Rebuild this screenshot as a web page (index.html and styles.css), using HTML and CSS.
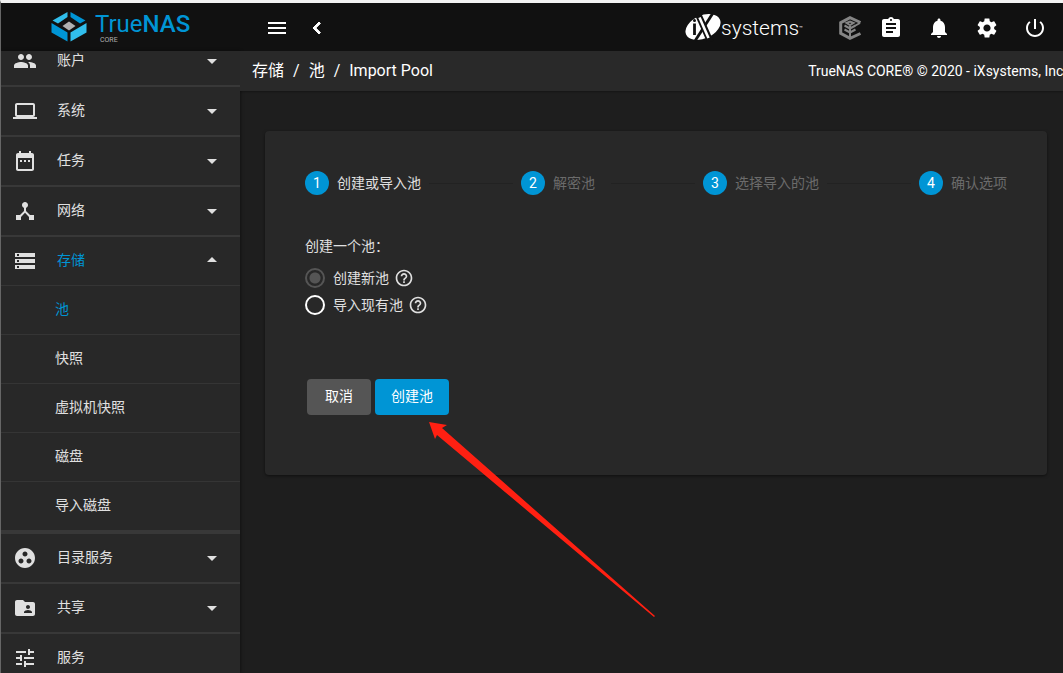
FILE: index.html
```html
<!DOCTYPE html>
<html lang="zh-CN">
<head>
<meta charset="utf-8">
<title>TrueNAS - Import Pool</title>
<link rel="stylesheet" href="styles.css">
</head>
<body>
<div class="app">
  <header class="topbar">
    <a class="brand" href="#" aria-label="TrueNAS CORE">
      <svg class="brand-mark" viewBox="0 0 36 30">
        <path fill="#31beec" d="M16.500 0V5L7 11.500L1.500 8.500ZM35.500 11L19.500 20.500V29.500L35.500 20.500Z"/>
        <path fill="#0095d5" d="M19.500 0L34.500 8.500L29 11.500L19.500 5ZM.5 11L16.500 20.500V29.500L.5 20.500Z"/>
        <path fill="#b0b0b0" d="M18 9.500L24.500 14L18 18.500L11.500 14Z"/>
      </svg>
      <span class="brand-text">
        <span class="brand-name">True<b>NAS</b></span>
        <span class="brand-edition">CORE</span>
      </span>
    </a>
    <div class="topbar-left">
      <button class="icon-button" aria-label="Menu"><svg class="icon" viewBox="0 0 24 24"><path d="M3 18h18v-2H3v2zm0-5h18v-2H3v2zm0-7v2h18V6H3z"/></svg></button>
      <button class="icon-button" aria-label="Collapse"><svg class="icon chevron" viewBox="0 0 24 24"><path d="M15.410 7.410L14 6l-6 6 6 6 1.410-1.410L10.830 12z"/></svg></button>
    </div>
    <a class="vendor" href="#" aria-label="iXsystems">
      <svg class="vendor-mark" viewBox="0 0 36 28">
        <ellipse cx="18" cy="13" rx="18.500" ry="11.500" transform="rotate(-24 18 13)" fill="#fff"/>
        <path d="M13 0L25.500 28" stroke="#111" stroke-width="6.500"/>
        <path d="M28 -1L10 27" stroke="#111" stroke-width="2.800"/>
        <path d="M14.500 3.500L23.500 24" stroke="#fff" stroke-width="2.600"/>
        <path d="M9.500 9.500V21" stroke="#111" stroke-width="2.800"/><circle cx="9.500" cy="6.500" r="1.500" fill="#111"/>
      </svg>
      <span class="vendor-name">systems</span><span class="vendor-tm">™</span>
    </a>
    <button class="icon-button command" aria-label="TrueCommand"><svg class="icon" viewBox="0 0 24 24"><g fill="none" stroke="#858585"><path stroke-width="3" d="M22.500 6.500L12 1.700L2.700 6.700V17.300L12 22.300L22.500 17.500"/><path stroke-width="2" d="M12 8V21M6.500 9.500L12 12.500L17.500 9.500M6.500 13.500L12 16.500L17.500 13.500M8.500 7L12 9L15.500 7L12 5.500ZM17.500 9.500L22 7"/></g></svg></button>
    <div class="topbar-right">
      <button class="icon-button" aria-label="Tasks"><svg class="icon" viewBox="0 0 24 24"><path d="M19 3h-4.180C14.400 1.840 13.300 1 12 1c-1.300 0-2.400.84-2.820 2H5c-1.100 0-2 .9-2 2v14c0 1.100.9 2 2 2h14c1.100 0 2-.9 2-2V5c0-1.100-.9-2-2-2zm-7 0c.55 0 1 .45 1 1s-.45 1-1 1-1-.45-1-1 .45-1 1-1zm2 14H7v-2h7v2zm3-4H7v-2h10v2zm0-4H7V7h10v2z"/></svg></button>
      <button class="icon-button" aria-label="Alerts"><svg class="icon" viewBox="0 0 24 24"><path d="M12 22c1.100 0 2-.9 2-2h-4c0 1.100.89 2 2 2zm6-6v-5c0-3.070-1.640-5.640-4.500-6.320V4c0-.83-.67-1.500-1.500-1.500s-1.500.67-1.500 1.500v.68C7.630 5.360 6 7.920 6 11v5l-2 2v1h16v-1l-2-2z"/></svg></button>
      <button class="icon-button" aria-label="Settings"><svg class="icon" viewBox="0 0 24 24"><path d="M19.140 12.940c.04-.3.060-.61.060-.94 0-.32-.02-.64-.07-.94l2.030-1.580c.18-.14.230-.41.120-.61l-1.920-3.320c-.12-.22-.37-.29-.59-.22l-2.390.96c-.5-.38-1.030-.7-1.620-.94L14.400 2.810c-.04-.24-.24-.41-.48-.41h-3.840c-.24 0-.43.17-.47.41L9.250 5.350c-.59.24-1.130.57-1.620.94l-2.390-.96c-.22-.08-.47 0-.59.22L2.740 8.870c-.12.21-.08.47.12.61l2.030 1.580c-.05.3-.09.63-.09.94s.02.64.07.94l-2.030 1.580c-.18.14-.23.41-.12.61l1.920 3.320c.12.220.37.290.59.220l2.390-.96c.5.380 1.030.7 1.620.94l.36 2.540c.05.240.24.410.48.410h3.840c.24 0 .44-.17.470-.41l.36-2.540c.59-.24 1.130-.56 1.620-.94l2.390.96c.22.080.47 0 .59-.22l1.920-3.320c.12-.22.070-.47-.12-.61l-2.010-1.580zM12 15.600c-1.980 0-3.600-1.620-3.600-3.600s1.620-3.600 3.600-3.600 3.600 1.620 3.600 3.600-1.620 3.600-3.600 3.600z"/></svg></button>
      <button class="icon-button" aria-label="Power"><svg class="icon" viewBox="0 0 24 24"><path d="M13 3h-2v10h2V3zm4.830 2.170l-1.420 1.420C17.990 7.860 19 9.810 19 12c0 3.870-3.130 7-7 7s-7-3.130-7-7c0-2.190 1.010-4.140 2.580-5.420L6.170 5.170C4.230 6.820 3 9.260 3 12c0 4.970 4.030 9 9 9s9-4.030 9-9c0-2.740-1.230-5.180-3.170-6.830z"/></svg></button>
    </div>
  </header>

  <div class="body">
    <nav class="sidebar">
      <ul class="menu">
        <li><a class="menu-item" href="#"><svg class="icon" viewBox="0 0 24 24"><path d="M16 11c1.660 0 2.990-1.340 2.990-3S17.660 5 16 5c-1.660 0-3 1.340-3 3s1.340 3 3 3zm-8 0c1.660 0 2.990-1.340 2.990-3S9.660 5 8 5C6.340 5 5 6.340 5 8s1.340 3 3 3zm0 2c-2.330 0-7 1.170-7 3.500V19h14v-2.500c0-2.330-4.670-3.500-7-3.500zm8 0c-.29 0-.62.020-.97.050 1.160.84 1.970 1.970 1.970 3.450V19h6v-2.500c0-2.330-4.670-3.500-7-3.500z"/></svg><span class="menu-label">账户</span><svg class="icon" viewBox="0 0 24 24"><path d="M7 10l5 5 5-5z"/></svg></a></li>
        <li><a class="menu-item" href="#"><svg class="icon" viewBox="0 0 24 24"><path d="M20 18c1.100 0 1.990-.9 1.990-2L22 6c0-1.100-.9-2-2-2H4c-1.100 0-2 .9-2 2v10c0 1.100.9 2 2 2H0v2h24v-2h-4zM4 6h16v10H4V6z"/></svg><span class="menu-label">系统</span><svg class="icon" viewBox="0 0 24 24"><path d="M7 10l5 5 5-5z"/></svg></a></li>
        <li><a class="menu-item" href="#"><svg class="icon" viewBox="0 0 24 24"><path d="M9 11H7v2h2v-2zm4 0h-2v2h2v-2zm4 0h-2v2h2v-2zm2-7h-1V2h-2v2H8V2H6v2H5c-1.110 0-1.990.9-1.990 2L3 20c0 1.100.89 2 2 2h14c1.100 0 2-.9 2-2V6c0-1.100-.9-2-2-2zm0 16H5V9h14v11z"/></svg><span class="menu-label">任务</span><svg class="icon" viewBox="0 0 24 24"><path d="M7 10l5 5 5-5z"/></svg></a></li>
        <li><a class="menu-item" href="#"><svg class="icon" viewBox="0 0 24 24"><path d="M17 16l-4-4V8.820C14.160 8.400 15 7.300 15 6c0-1.660-1.340-3-3-3S9 4.340 9 6c0 1.300.84 2.400 2 2.820V12l-4 4H3v5h5v-3.050l4-4.200 4 4.200V21h5v-5h-4z"/></svg><span class="menu-label">网络</span><svg class="icon" viewBox="0 0 24 24"><path d="M7 10l5 5 5-5z"/></svg></a></li>
        <li class="open"><a class="menu-item active" href="#"><svg class="icon" viewBox="0 0 24 24"><path d="M2 20h20v-4H2v4zm2-3h2v2H4v-2zM2 4v4h20V4H2zm4 3H4V5h2v2zm-4 7h20v-4H2v4zm2-3h2v2H4v-2z"/></svg><span class="menu-label">存储</span><svg class="icon" viewBox="0 0 24 24"><path d="M7 13l5-5 5 5z"/></svg></a>
          <ul class="submenu">
            <li><a class="submenu-item active" href="#">池</a></li>
            <li><a class="submenu-item" href="#">快照</a></li>
            <li><a class="submenu-item" href="#">虚拟机快照</a></li>
            <li><a class="submenu-item" href="#">磁盘</a></li>
            <li><a class="submenu-item" href="#">导入磁盘</a></li>
          </ul>
        </li>
        <li><a class="menu-item" href="#"><svg class="icon" viewBox="0 0 24 24"><path d="M12 2C6.480 2 2 6.480 2 12s4.480 10 10 10 10-4.480 10-10S17.520 2 12 2zM8 17.500c-1.380 0-2.500-1.120-2.500-2.500s1.120-2.500 2.500-2.500 2.500 1.120 2.500 2.500-1.120 2.500-2.500 2.500zM9.500 8c0-1.380 1.120-2.500 2.500-2.500s2.500 1.120 2.500 2.500-1.120 2.500-2.500 2.500S9.500 9.380 9.500 8zm6.500 9.500c-1.380 0-2.500-1.120-2.500-2.500s1.120-2.500 2.500-2.500 2.500 1.120 2.500 2.500-1.120 2.500-2.500 2.500z"/></svg><span class="menu-label">目录服务</span><svg class="icon" viewBox="0 0 24 24"><path d="M7 10l5 5 5-5z"/></svg></a></li>
        <li><a class="menu-item" href="#"><svg class="icon" viewBox="0 0 24 24"><path d="M20 6h-8l-2-2H4c-1.100 0-1.990.9-1.990 2L2 18c0 1.100.9 2 2 2h16c1.100 0 2-.9 2-2V8c0-1.100-.9-2-2-2zm-5 3c1.100 0 2 .9 2 2s-.9 2-2 2-2-.9-2-2 .9-2 2-2zm4 8h-8v-1c0-1.330 2.670-2 4-2s4 .67 4 2v1z"/></svg><span class="menu-label">共享</span><svg class="icon" viewBox="0 0 24 24"><path d="M7 10l5 5 5-5z"/></svg></a></li>
        <li><a class="menu-item" href="#"><svg class="icon" viewBox="0 0 24 24"><path d="M3 17v2h6v-2H3zM3 5v2h10V5H3zm10 16v-2h8v-2h-8v-2h-2v6h2zM7 9v2H3v2h4v2h2V9H7zm14 4v-2H11v2h10zm-6-4h2V7h4V5h-4V3h-2v6z"/></svg><span class="menu-label">服务</span></a></li>
      </ul>
    </nav>

    <div class="content">
      <div class="crumb-bar">
        <nav class="crumbs"><a href="#">存储</a><span>/</span><a href="#">池</a><span>/</span><a href="#">Import Pool</a></nav>
        <span class="copyright">TrueNAS CORE® © 2020 - iXsystems, Inc.</span>
      </div>
      <main class="page">
        <section class="card">
          <ol class="stepper">
            <li class="step current"><span class="step-number">1</span><span class="step-label">创建或导入池</span></li>
            <li class="step"><span class="step-number">2</span><span class="step-label">解密池</span></li>
            <li class="step"><span class="step-number">3</span><span class="step-label">选择导入的池</span></li>
            <li class="step"><span class="step-number">4</span><span class="step-label">确认选项</span></li>
          </ol>
          <form class="form">
            <fieldset class="choices">
              <legend>创建一个池：</legend>
              <div class="choice"><input type="radio" name="pool" id="pool-new" checked><label for="pool-new">创建新池</label><svg class="icon help" viewBox="0 0 24 24"><path d="M11 18h2v-2h-2v2zm1-16C6.480 2 2 6.480 2 12s4.480 10 10 10 10-4.480 10-10S17.520 2 12 2zm0 18c-4.410 0-8-3.590-8-8s3.590-8 8-8 8 3.590 8 8-3.590 8-8 8zm0-14c-2.210 0-4 1.790-4 4h2c0-1.100.9-2 2-2s2 .9 2 2c0 2-3 1.750-3 5h2c0-2.250 3-2.500 3-5 0-2.210-1.790-4-4-4z"/></svg></div>
              <div class="choice"><input type="radio" name="pool" id="pool-import"><label for="pool-import">导入现有池</label><svg class="icon help" viewBox="0 0 24 24"><path d="M11 18h2v-2h-2v2zm1-16C6.480 2 2 6.480 2 12s4.480 10 10 10 10-4.480 10-10S17.520 2 12 2zm0 18c-4.410 0-8-3.590-8-8s3.590-8 8-8 8 3.590 8 8-3.590 8-8 8zm0-14c-2.210 0-4 1.790-4 4h2c0-1.100.9-2 2-2s2 .9 2 2c0 2-3 1.750-3 5h2c0-2.250 3-2.500 3-5 0-2.210-1.790-4-4-4z"/></svg></div>
            </fieldset>
            <div class="actions">
              <button type="button" class="button">取消</button>
              <button type="button" class="button primary">创建池</button>
            </div>
          </form>
          <svg class="pointer" viewBox="0 0 228 197" aria-hidden="true"><path fill="#ff2012" d="M0 0L18 3L13 6L226 194L225 195L8 13L6 17Z"/></svg>
        </section>
      </main>
    </div>
  </div>
</div>
</body>
</html>
```
FILE: styles.css
```css
* { box-sizing: border-box; }

body {
  margin: 0;
  background: #1e1e1e;
  color: #e0e0e0;
  font: 14px/20px Roboto, "Noto Sans CJK SC", sans-serif;
}

a { color: inherit; text-decoration: none; }
ul, ol { margin: 0; padding: 0; list-style: none; }

.app {
  display: flex;
  flex-direction: column;
  height: 100vh;
  overflow: hidden;
  border-top: 3px solid #f2f2f2;
  border-left: 1px solid #666;
}

.icon { flex: none; width: 24px; height: 24px; fill: currentColor; }

.topbar {
  display: flex;
  align-items: center;
  flex: none;
  height: 48px;
  padding: 2px 16px 0 0;
  background: #111;
  color: #fff;
}

.brand { display: flex; flex: none; gap: 8px; width: 251px; padding-left: 50px; }
.brand-mark { width: 36px; height: 30px; }
.brand-text { display: flex; flex-direction: column; color: #0095d5; }
.brand-name { font-size: 24px; line-height: 24px; }
.brand-name b { font-weight: 500; }
.brand-edition { padding-left: 5px; color: #b0b0b0; font-size: 7px; line-height: 8px; }

.topbar-left { display: flex; gap: 16px; padding-left: 13px; }
.topbar-right { display: flex; gap: 24px; margin-left: 17px; }
.icon-button { display: flex; padding: 0; border: 0; background: none; color: inherit; }
.chevron { stroke: currentColor; stroke-width: 1px; }

.vendor { display: flex; align-items: center; margin-left: auto; }
.vendor-mark { width: 36px; height: 28px; }
.vendor-name { font-size: 21px; font-weight: 300; line-height: 28px; }
.vendor-tm { font-size: 6px; line-height: 6px; }
.command { margin-left: 35px; }

.body { display: flex; flex: 1; min-height: 0; }

.sidebar {
  flex: none;
  width: 239px;
  overflow: hidden;
  background: #282828;
  box-shadow: 1px 0 3px rgba(0, 0, 0, .4);
}
.menu { margin-top: -14px; }
.menu > li { border-bottom: 2px solid #383838; }
.menu > li.open { border-bottom-width: 4px; }
.menu-item { display: flex; align-items: center; height: 48px; padding: 0 16px 0 12px; }
.menu-label { flex: 1; padding: 0 0 2px 20px; }
.active .menu-label, .submenu-item.active { color: #0095d5; }
.submenu-item { display: block; padding: 13px 16px 15px 54px; border-top: 1px solid #353535; }

.content { flex: 1; min-width: 0; overflow: hidden; }
.crumb-bar {
  display: flex;
  align-items: center;
  justify-content: space-between;
  height: 40px;
  padding-left: 12px;
  background: #292929;
  color: #fff;
  white-space: nowrap;
  box-shadow: 0 1px 2px rgba(0, 0, 0, .3);
}
.crumbs { display: flex; gap: 9px; font-size: 16px; line-height: 22px; }
.copyright { margin-right: -4px; }

.page { padding: 40px 16px 40px 25px; }
.card {
  position: relative;
  padding: 40px 40px 60px;
  border-radius: 4px;
  background: #282828;
  box-shadow: 0 1px 3px rgba(0, 0, 0, .5);
}

.stepper { display: flex; }
.step { display: flex; align-items: center; flex: 1 0 auto; gap: 8px; color: #6b6b6b; }
.step:last-child { flex: none; }
.step:not(:last-child)::after {
  content: "";
  flex: 1;
  height: 1px;
  margin-right: 8px;
  background: #222;
}
.step.current { color: #e0e0e0; }
.step-number {
  width: 24px;
  border-radius: 50%;
  background: #0095d5;
  color: #fff;
  line-height: 24px;
  text-align: center;
}
.step-label { min-width: 50px; }

.form { padding-top: 41px; }
.choices { display: flex; flex-direction: column; gap: 3px; margin: 0; padding: 0; border: 0; }
.choices legend { padding: 0 0 10px; }
.choice { display: flex; align-items: center; height: 24px; }
.choice input {
  appearance: none;
  width: 20px;
  height: 20px;
  margin: 0 8px 0 0;
  border: 2px solid #fff;
  border-radius: 50%;
}
.choice input:checked {
  border-color: #555;
  background: radial-gradient(circle, #555 5px, transparent 6px);
}
.help { width: 20px; height: 20px; margin-left: 5px; }

.actions { display: flex; gap: 4px; padding: 62px 2px 0; }
.button {
  height: 36px;
  padding: 0 16px 2px;
  border: 0;
  border-radius: 4px;
  background: #555;
  color: #fff;
  font: inherit;
  min-width: 64px;
}
.primary { background: #0095d5; }

.pointer { position: absolute; top: 291px; left: 164px; width: 228px; height: 197px; }
```
